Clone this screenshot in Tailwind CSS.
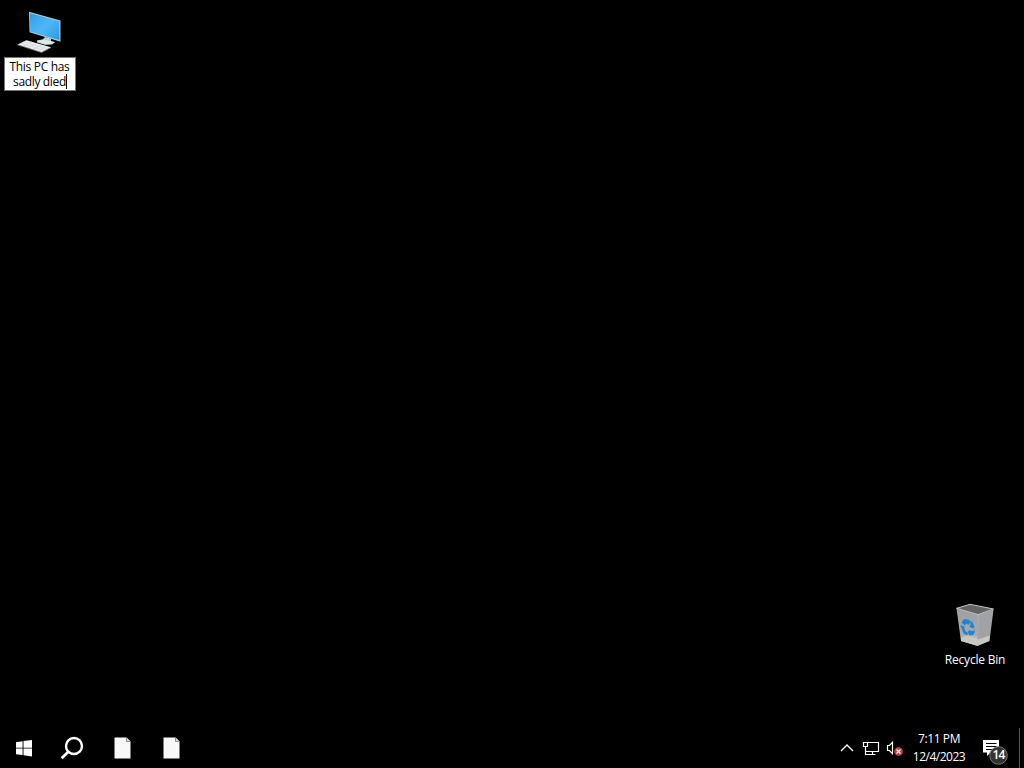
<!DOCTYPE html>
<html lang="en">
<head>
    <meta charset="UTF-8">
    <meta name="viewport" content="width=device-width, initial-scale=1.0">
    <title>Desktop</title>
    <script src="https://cdn.jsdelivr.net/npm/@tailwindcss/browser@4"></script>
</head>
<body class="bg-black">
    <div class="flex h-screen flex-col overflow-hidden bg-black font-['Open_Sans','Noto_Sans',sans-serif] text-[12px] text-white">
        <!-- Desktop icons -->
        <main class="relative flex-1">
            <div class="absolute left-1 top-2 w-[72px]">
                <svg class="ml-3 h-[49px] w-12" viewBox="16 8 48 49">
                    <defs>
                        <linearGradient id="screen" x1="0" y1="0" x2="1" y2="1">
                            <stop offset="0" stop-color="#2f9be6" />
                            <stop offset="0.5" stop-color="#4db8f8" />
                            <stop offset="1" stop-color="#2b98e4" />
                        </linearGradient>
                    </defs>
                    <path fill="#b9d3da" d="M45 37l6 1.500v3l4 .8-3 2.200-7 .3-8-2.300v-2l6-1.200z" />
                    <path fill="#dde9ea" d="M37 41l7-1.300 11 2.300-4 2-6 .3z" />
                    <path fill="#a9c8d6" d="M29 11.800l31.500 8.600v21.400L29.500 32.300z" />
                    <path fill="url(#screen)" d="M30 13.200l29.300 8V40L30.300 31.400z" />
                    <path fill="#eceff0" d="M26.500 40.300L51 47.300 41.500 52.300 17.500 44.600z" />
                    <path stroke="#c4cacc" stroke-width=".5" fill="none" d="M20.500 43.200l24 7.300M23.500 41.800l24 7.200M23 46.200l9-4.300M28 47.700l9-4.400M33 49.300l9-4.400M38 50.800l9-4.500" />
                    <path stroke="#a5adb0" stroke-width=".6" fill="none" d="M17.500 44.800l24 7.700 9.500-5" />
                </svg>
                <div class="h-[34px] border border-[#777] bg-white pt-px text-center leading-[15px] text-black">
                    <div class="-ml-[1px] tracking-[-0.32px]">This PC has</div>
                    <div class="flex justify-center"><span class="tracking-[-0.35px]">sadly died</span><span class="h-[15px] w-px bg-black"></span></div>
                </div>
            </div>

            <div class="absolute left-[939px] top-[600px] w-[72px] text-center">
                <svg class="mx-auto h-[50px] w-12" viewBox="951 600 48 50">
                    <defs>
                        <linearGradient id="bin" x1="0" y1="0" x2="0" y2="1">
                            <stop offset="0" stop-color="#9c9ea0" />
                            <stop offset="0.7" stop-color="#a9abac" />
                            <stop offset="0.88" stop-color="#d4d4d1" />
                            <stop offset="1" stop-color="#c5c5c2" />
                        </linearGradient>
                    </defs>
                    <path fill="url(#bin)" d="M956.500 608.500L978 614.500 977.500 646 961 641z" />
                    <path fill="#a0a2a3" d="M978 614.500L993.500 609.500 989.500 641 977.500 646z" />
                    <path fill="#c9c7c2" d="M961 638l7-2.500 9.800 3.500v6.800L961 641zM977.700 639.500l12.200-4-.7 5.500-11.700 4.800z" />
                    <path fill="#626466" stroke="#c3c5c6" stroke-width="1" stroke-linejoin="round" d="M956.500 608.300L970 604.300 993.500 609 978 614.600z" />
                    <path stroke="#c0c2c3" stroke-width=".7" fill="none" d="M978 615l-.4 31" />
                    <g fill="#1c85d8">
                        <path d="M961.500 622.500l2.500-3.500 5.200.8 1.200 2.500-2 2.700-1.900-1.600-1.800 2.100z" />
                        <path d="M970.300 620.800l2.500 1.700 1.700 4.700-1.500 1.200-3.800-1.900 1.300-1.400z" />
                        <path d="M960.300 625l4.700 1.700-.8 1.500 1.500 3.400 2 .9-.2 2.800-3.700-1.500-2.200-5.300z" />
                        <path d="M967.700 632l2.200-2.600v1.400l3.500.3.900-2 .5 3.200-2 3-2.700-.3v1.500z" />
                    </g>
                </svg>
                <div class="mt-[2px] leading-4 tracking-[-0.22px]">Recycle Bin</div>
            </div>
        </main>

        <!-- Taskbar -->
        <footer class="flex h-10 items-stretch">
            <button class="flex w-12 items-center justify-center">
                <svg class="h-10 w-12" viewBox="0 0 48 40" fill="#fff">
                    <path d="M16 14.200l6.600-1v6.500H16zM23.500 13.100l8.500-1.200v7.800h-8.500zM16 20.600h6.600v6.500l-6.600-.9zM23.500 20.600H32v7.800l-8.500-1.200z" />
                </svg>
            </button>
            <button class="w-12">
                <svg class="h-10 w-12" viewBox="48 728 48 40" fill="none" stroke="#fff" stroke-width="2.400">
                    <circle cx="74" cy="746" r="8" />
                    <path d="M68.300 751.700l-6.600 6.600" stroke-width="2.700" />
                </svg>
            </button>
            <button class="ml-[2px] w-[49px]">
                <svg class="h-10 w-[49px]" viewBox="98 728 49 40">
                    <path fill="#f8f8f8" d="M114.500 737.500h12l4 4v17h-16z" />
                    <path fill="#ddd" stroke="#777" stroke-width=".8" d="M126.500 737.500v4h4" />
                </svg>
            </button>
            <button class="w-[49px]">
                <svg class="h-10 w-[49px]" viewBox="98 728 49 40">
                    <path fill="#f8f8f8" d="M114.500 737.500h12l4 4v17h-16z" />
                    <path fill="#ddd" stroke="#777" stroke-width=".8" d="M126.500 737.500v4h4" />
                </svg>
            </button>

            <div class="ml-auto flex">
                <svg class="h-10 w-[70px]" viewBox="836 728 70 40" fill="none" stroke="#fff">
                    <path stroke-width="1.400" d="M841 751l6-6 6 6" />
                    <path d="M868 742.500h10.500v9h-13M863.500 742.500h4v4h-4zM865.500 746.500v8M872.500 751.500v3M865 754.500h10.500" stroke-width="1.200" />
                    <path d="M887.500 745.500h2l3-3.200v11.400l-3-3.200h-2z" stroke-width="1.200" />
                    <circle cx="898.500" cy="751.500" r="4.400" fill="#bf3a48" stroke="none" />
                    <path d="M896.500 749.500l4 4M900.500 749.500l-4 4" stroke-width="1.200" />
                </svg>
                <div class="flex w-[66px] flex-col items-center pt-[2px] leading-[18px]">
                    <span class="tracking-[-0.4px]">7:11 PM</span>
                    <span class="tracking-[-0.5px]">12/4/2023</span>
                </div>
                <div class="relative w-[47px]">
                    <svg class="h-10 w-[47px]" viewBox="972 728 47 40">
                        <path fill="#fff" d="M983 740h16v12.500h-8.500l-3.500 3.500v-3.500h-4z" />
                        <path stroke="#000" stroke-width="1" d="M986 743.500h10.500M986 746.500h10.500M986 749.500h6" />
                        <circle cx="998.500" cy="755.500" r="8.800" fill="#333" stroke="#777" stroke-width="1" />
                    </svg>
                    <span class="absolute left-[18px] top-[19px] w-[17px] text-center text-[12px] font-semibold leading-[15px] tracking-[-0.8px]">14</span>
                </div>
                <div class="w-[5px] border-l border-[#555]"></div>
            </div>
        </footer>
    </div>
</body>
</html>
